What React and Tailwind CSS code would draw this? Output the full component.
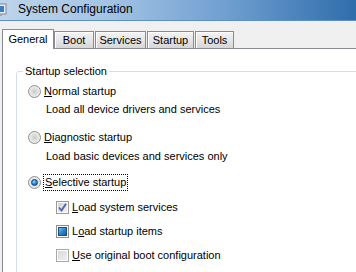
import React from 'react';

const tabs = [
  { label: 'General', w: 'w-[52px]', active: true },
  { label: 'Boot', w: 'w-[40px]' },
  { label: 'Services', w: 'w-[51px] ml-[1px]' },
  { label: 'Startup', w: 'w-[47px] ml-[1px]' },
  { label: 'Tools', w: 'w-[39px] ml-[1px]' },
];

function Radio({ checked }) {
  return (
    <span className="flex h-[13px] w-[13px] shrink-0 items-center justify-center rounded-full border border-[#8e8f8f] bg-[radial-gradient(circle_at_50%_50%,#c9c9c9_0%,#e2e2e2_45%,#f8f8f8_100%)]">
      {checked && (
        <span className="h-[7px] w-[7px] rounded-full border border-[#16457a] bg-[radial-gradient(circle_at_40%_35%,#9fd6ff_0%,#2f8ae0_45%,#0d4f94_100%)]" />
      )}
    </span>
  );
}

function Checkbox({ state }) {
  if (state === 'checked') {
    return (
      <span className="flex h-[13px] w-[13px] shrink-0 items-center justify-center border border-[#9a9a9a] bg-white p-[1px]">
        <span className="flex h-full w-full items-center justify-center bg-[linear-gradient(135deg,#d2d2d2,#f1f1f1)]">
          <svg width="9" height="9" viewBox="0 0 9 9">
            <path d="M1 4.5 L3.5 7.5 L8 0.8" fill="none" stroke="#4b63a6" strokeWidth="1.8" />
          </svg>
        </span>
      </span>
    );
  }
  if (state === 'mixed') {
    return (
      <span className="flex h-[13px] w-[13px] shrink-0 items-center justify-center border border-[#8e8f8f] bg-white p-[1px]">
        <span className="h-full w-full border border-[#1d4f86] bg-[linear-gradient(135deg,#7cc1f2,#2b86cf_50%,#1c5f9f)]" />
      </span>
    );
  }
  return (
    <span className="flex h-[13px] w-[13px] shrink-0 items-center justify-center border border-[#a8a8a8] bg-white p-[1px]">
      <span className="h-full w-full bg-[linear-gradient(135deg,#d9d9d9,#efefef)]" />
    </span>
  );
}

export default function App() {
  return (
    <div className="flex h-[272px] w-[356px] flex-col overflow-hidden bg-[#f0f0f0] font-['Liberation_Sans',Arial,sans-serif] text-[11px] text-black">
      {/* title bar */}
      <div className="flex h-[21px] shrink-0 items-start border-b border-[#5c8fc4] bg-[linear-gradient(to_right,#bdd4eb_0%,#a4c4e5_30%,#6d9dcf_65%,#2f6dab_100%)]">
        <svg width="16" height="16" viewBox="0 0 16 16" className="ml-[-9px] mt-[2px] shrink-0">
          <rect x="1" y="2" width="14" height="10" fill="#e8eef4" stroke="#7d8a99" />
          <rect x="3" y="4" width="10" height="6" fill="#3d7fc4" />
          <rect x="5" y="12" width="6" height="2" fill="#9aa6b3" />
        </svg>
        <span className="ml-[11px] mt-[1px] text-[12px] leading-[16px]">System Configuration</span>
      </div>

      {/* tab strip */}
      <div className="flex h-[27px] shrink-0 items-end pl-[2px]">
        {tabs.map((t) =>
          t.active ? (
            <div
              key={t.label}
              className={`relative z-10 -mb-px flex h-[20px] items-center justify-center border-x border-t border-[#898c95] bg-white ${t.w}`}
            >
              {t.label}
            </div>
          ) : (
            <div
              key={t.label}
              className={`flex h-[17px] items-center justify-center border-x border-t border-[#898c95] bg-[linear-gradient(to_bottom,#f3f3f3,#e6e6e6_50%,#d6d6d6)] shadow-[inset_1px_1px_0_#fff] ${t.w}`}
            >
              {t.label}
            </div>
          )
        )}
      </div>

      {/* pane */}
      <div className="ml-[2px] flex-1 border-l border-t border-[#898c95] bg-white">
        <fieldset className="ml-[13px] mr-[-20px] mt-[14px] rounded-[3px] border border-[#d5dfe5] pb-[10px]">
          <legend className="ml-[6px] px-[2px] leading-[16px]">Startup selection</legend>

          <div className="mt-[2px] flex h-[20px] items-center gap-[3px] pl-[11px]">
            <Radio />
            <span>
              <span className="underline">N</span>ormal startup
            </span>
          </div>
          <div className="flex h-[16px] items-center pl-[29px]">Load all device drivers and services</div>

          <div className="mt-[10px] flex h-[20px] items-center gap-[3px] pl-[11px]">
            <Radio />
            <span>
              <span className="underline">D</span>iagnostic startup
            </span>
          </div>
          <div className="mt-[1px] flex h-[16px] items-center pl-[29px]">Load basic devices and services only</div>

          <div className="mt-[8px] flex h-[20px] items-center gap-[2px] pl-[11px]">
            <Radio checked />
            <span className="border border-dotted border-black px-[1px] leading-[15px]">
              <span className="underline">S</span>elective startup
            </span>
          </div>

          <div className="mt-[5px] flex h-[20px] items-center gap-[3px] pl-[39px]">
            <Checkbox state="checked" />
            <span>
              <span className="underline">L</span>oad system services
            </span>
          </div>
          <div className="mt-[4px] flex h-[20px] items-center gap-[3px] pl-[39px]">
            <Checkbox state="mixed" />
            <span>
              L<span className="underline">o</span>ad startup items
            </span>
          </div>
          <div className="mt-[4px] flex h-[20px] items-center gap-[3px] pl-[39px]">
            <Checkbox />
            <span>
              <span className="underline">U</span>se original boot configuration
            </span>
          </div>
        </fieldset>
      </div>
    </div>
  );
}
